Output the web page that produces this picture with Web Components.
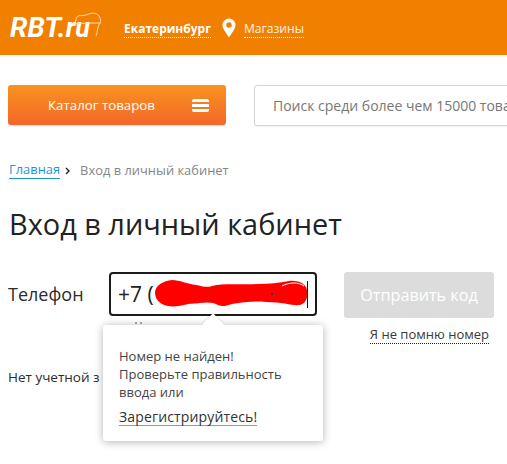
<!DOCTYPE html>
<html lang="ru"><head><meta charset="utf-8"><style>
html,body{margin:0;padding:0;background:#fff;overflow:hidden;height:464px}
body{font-family:"Open Sans","Noto Sans",sans-serif;color:#222}
</style></head><body>
<site-header></site-header>
<search-bar></search-bar>
<bread-crumbs></bread-crumbs>
<login-form></login-form>
<script>
function def(name,html){customElements.define(name,class extends HTMLElement{constructor(){super();this.attachShadow({mode:'open'}).innerHTML=html}})}
def('site-header',`<style>
:host{display:flex;align-items:flex-start;height:55px;background:#f28000;color:#fff;box-sizing:border-box;padding-left:10px}
.logo{display:flex;position:relative;width:92px;margin-top:10px;font:italic bold 28px/36px Roboto,sans-serif;white-space:nowrap}
.logo svg{position:absolute;left:62px;top:2px}
.logo b{font-weight:700;font-size:27px}
.city{margin-left:22px;margin-top:20px;font-weight:700;font-size:12px;line-height:17px;border-bottom:1px dotted #fff;white-space:nowrap}
.pin{margin-left:11px;margin-top:18px}
.shops{margin-left:8px;margin-top:20px;font-size:12.100px;line-height:17px;border-bottom:1px dotted #fff;white-space:nowrap;color:#fff2e4}
</style>
<div class="logo">RBT.<b>ru</b><svg width="32" height="27" viewBox="0 0 32 27" fill="none" stroke="#f8dcb8" stroke-width="1"><path d="M3 12C4 8 4 5 6 4C9 3 11 4 14 3C18 1 24 0 27 4C29 7 29 9 28 11C25 14 26 20 24 24M3 12C11 11 20 11 28 11"/></svg></div>
<div class="city">Екатеринбург</div>
<svg class="pin" width="14" height="20" viewBox="0 0 14 20"><path fill="#fff" fill-rule="evenodd" d="M7 0.500a6.500 6.500 0 0 1 6.500 6.500C13.500 11 9 16 7 19.500C5 16 0.500 11 0.500 7A6.500 6.500 0 0 1 7 0.500zM7 4.300a2.700 2.700 0 1 0 0 5.400a2.700 2.700 0 0 0 0-5.400z"/></svg>
<div class="shops">Магазины</div>`);
def('search-bar',`<style>
:host{display:flex;align-items:flex-start;padding:30px 0 0 8px;height:71px;box-sizing:content-box;overflow:hidden}
.cat{flex:none;width:218px;height:40px;box-sizing:border-box;border-radius:3px;background:linear-gradient(#f7931e,#f4672a);color:#fff;display:flex;align-items:center;font-size:13.300px;box-shadow:0 1px 1px rgba(0,0,0,.12)}
.cat span{margin-left:40px;width:144px;white-space:nowrap}
.cat i{display:block;width:17px;height:13px;background:linear-gradient(#fff 3px,transparent 3px 5px,#fff 5px 8px,transparent 8px 10px,#fff 10px);border-radius:2px}
.s{margin-left:28px;flex:none;width:400px;height:41px;box-sizing:border-box;border:1px solid #d4d4d4;border-radius:3px;color:#777;font-size:14px;line-height:39px;padding-left:18px;white-space:nowrap;box-shadow:0 1px 1px rgba(0,0,0,.06)}
</style><div class="cat"><span>Каталог товаров</span><i></i></div><div class="s">Поиск среди более чем 15000 това</div>`);
def('bread-crumbs',`<style>
:host{display:flex;align-items:center;padding-left:9px;font-size:12.900px;line-height:17px;color:#868686;white-space:nowrap;margin-top:5px}
a{color:#1c97d1;border-bottom:1px solid #1c97d1}
svg{margin:2px 10px 0 5px}
</style><a>Главная</a><svg width="5" height="8" viewBox="0 0 5 8" fill="none" stroke="#222" stroke-width="1.400"><path d="M1 1l3 3-3 3"/></svg><span>Вход в личный кабинет</span>`);
def('login-form',`<style>
:host{display:block;padding:26px 0 0 9px;position:relative}
h1{margin:0;font-weight:400;font-size:28.900px;line-height:38px;color:#222;white-space:nowrap}
.row{display:flex;align-items:flex-start;margin-top:29px}
label{width:101px;font-size:18px;line-height:23px;margin-top:11px;margin-left:-1px;color:#2b2b2b}
.inp{position:relative;width:208px;height:44px;box-sizing:border-box;border:2px solid #1b1b1b;border-radius:4px;font-size:21px;line-height:40px;padding-left:7px;color:#222;white-space:nowrap}
.inp svg{position:absolute;left:43px;top:5px}
.caret{position:absolute;left:196px;top:7px;width:1px;height:27px;background:#111}
.side{margin-left:27px;width:150px;display:flex;flex-direction:column;align-items:flex-end}
.btn{width:150px;height:46px;background:#dcdcdc;border-radius:3px;color:#fff;font-size:16.200px;line-height:46px;text-align:center}
.forgot{margin-top:8px;margin-right:5px;font-size:13px;line-height:17px;color:#3a3a3a;border-bottom:1px dotted #222;white-space:nowrap}
.none{font-size:13.500px;line-height:17px;margin-top:25px;margin-left:-1px;color:#2b2b2b;white-space:nowrap;width:94px;overflow:hidden}
.peek{position:absolute;left:135px;top:143px;width:7px;border-top:2px dotted #aaa}
</style><h1>Вход в личный кабинет</h1>
<div class="row"><label>Телефон</label>
<div class="inp">+7 (<svg width="156" height="30" viewBox="0 0 156 30"><path fill="#f00" d="M1 13C2 6 9 2 18 1C26 1 33 5 42 6C48 7 52 9 58 7C70 4 85 6 105 5C115 5 125 4 135 2C145 1 152 5 153 11C154 17 153 24 146 26C138 27 130 23 112 23C100 22 90 23 78 25C72 27 68 28 64 26C60 23 52 23 46 24C40 25 36 24 30 26C22 28 13 28 8 25C3 22 1 18 1 13z"/><path fill="none" stroke="#fff" d="M128 7C135 3 145 3 150 7"/><path fill="#333" d="M117 14h2v2h-2z"/></svg><span class="caret"></span></div>
<div class="side"><div class="btn">Отправить код</div><div class="forgot">Я не помню номер</div></div></div>
<div class="none">Нет учетной з</div>
<div class="peek"></div>
<info-tip></info-tip>`);
def('info-tip',`<style>
:host{position:absolute;left:103px;top:146px;width:220px;height:116px;box-sizing:border-box;background:#fff;border-radius:3px;box-shadow:0 1px 8px rgba(0,0,0,.3);padding:22px 0 0 16px;font-size:13px;line-height:18px;color:#444;white-space:nowrap}
:host::before{content:"";position:absolute;left:102px;top:-9px;width:16px;height:16px;background:#fff;transform:rotate(45deg) scale(.95);box-shadow:-1px -1px 2px rgba(0,0,0,.1)}
p{margin:0;position:relative}
a{position:relative;display:inline-block;margin-top:7px;font-weight:500;font-size:14px;letter-spacing:.15px;line-height:17px;color:#333;border-bottom:1px solid #e08a2c}
</style><p>Номер не найден!<br>Проверьте правильность<br>ввода или</p><a>Зарегистрируйтесь!</a>`);
</script></body></html>
